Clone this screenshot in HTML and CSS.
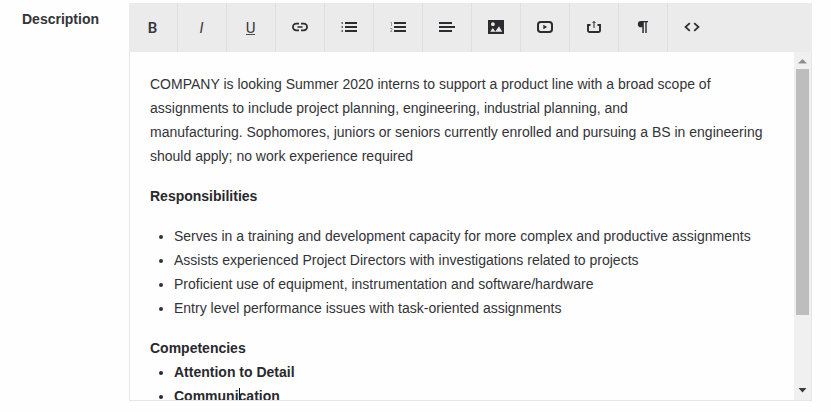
FILE: index.html
```
<!DOCTYPE html>
<html lang="en">
<head>
    <meta charset="UTF-8">
    <meta name="viewport" content="width=device-width, initial-scale=1.0">
    <title>Description</title>
    <link rel="stylesheet" href="styles.css">
</head>
<body>

<div class="form-row">
  <label class="form-label">Description</label>

  <div class="editor">
    <div class="toolbar">
      <button class="tool bold">B</button>
      <button class="tool italic">I</button>
      <button class="tool underline"><span>U</span></button>
      <button class="tool">
        <svg width="18" height="18" viewBox="0 0 18 18"><path d="M8 5.7H5.2a3.3 3.3 0 0 0 0 6.6H8M10 5.7h2.8a3.3 3.3 0 0 1 0 6.600H10M6.500 9h5" fill="none" stroke="#2b2b30" stroke-width="1.700"/></svg>
      </button>
      <button class="tool">
        <svg width="18" height="18" viewBox="0 0 18 18"><path d="M5 4h12v2H5zM5 8h12v2H5zM5 12h12v2H5z"/><path d="M1.500 4H3v2H1.500zM1.500 8H3v2H1.500zM1.500 12H3v2H1.500z" fill="#6b6461"/></svg>
      </button>
      <button class="tool">
        <svg width="18" height="18" viewBox="0 0 18 18"><path d="M5 4h12v2H5zM5 8h12v2H5zM5 12h12v2H5z"/><path d="M1.500 4.500h1V8M1.200 10.500h1.800v1.200L1.500 13.500h1.800" fill="none" stroke="#8a7f78" stroke-width=".8"/></svg>
      </button>
      <button class="tool">
        <svg width="18" height="18" viewBox="0 0 18 18"><path d="M1 4h13v2H1zM1 8h16v2H1zM1 12h13v2H1z"/></svg>
      </button>
      <button class="tool">
        <svg width="18" height="18" viewBox="0 0 18 18"><path fill-rule="evenodd" d="M1 2h16v14H1zM4 6.200a1.900 1.900 0 1 0 3.800 0a1.900 1.900 0 1 0-3.800 0M3.200 13.700h5.300L5.800 10zM8.200 13.700h7L12 8.200z"/></svg>
      </button>
      <button class="tool">
        <svg width="18" height="18" viewBox="0 0 18 18"><rect x="2" y="4" width="14" height="10" rx="2.800" fill="none" stroke="#2b2b30" stroke-width="2"/><path d="M7.300 6.800v4.400L11.200 9z"/></svg>
      </button>
      <button class="tool">
        <svg width="18" height="18" viewBox="0 0 18 18"><path d="M5.500 7H3v5.500A1.500 1.500 0 0 0 4.500 14h9a1.500 1.500 0 0 0 1.500-1.500V7h-2.500" fill="none" stroke="#2b2b30" stroke-width="1.900"/><path d="M8.400 4h1.200v6H8.400zM9 2.700l2 2.300H7z" fill="#4a4a4e"/></svg>
      </button>
      <button class="tool">
        <svg width="18" height="18" viewBox="0 0 18 18"><path d="M7 3h7v1.300h-1.300V15h-1.400V4.300H9.800V15H8.300V9.300H7a3.100 3.100 0 0 1 0-6.300z"/></svg>
      </button>
      <button class="tool">
        <svg width="18" height="18" viewBox="0 0 18 18"><path d="M6.800 5.200L2.500 9l4.300 3.800M11.200 5.200L15.500 9l-4.300 3.800" fill="none" stroke="#2b2b30" stroke-width="1.700"/></svg>
      </button>
    </div>

    <div class="editor-body">
      <div class="content">
        <p>COMPANY is looking Summer 2020 interns to support a product line with a broad scope of<br>assignments to include project planning, engineering, industrial planning, and<br>manufacturing. Sophomores, juniors or seniors currently enrolled and pursuing a BS in engineering<br>should apply; no work experience required</p>
        <p><strong>Responsibilities</strong></p>
        <ul>
          <li>Serves in a training and development capacity for more complex and productive assignments</li>
          <li>Assists experienced Project Directors with investigations related to projects</li>
          <li>Proficient use of equipment, instrumentation and software/hardware</li>
          <li>Entry level performance issues with task-oriented assignments</li>
        </ul>
        <strong>Competencies</strong>
        <ul class="strong-list">
          <li>Attention to Detail</li>
          <li>Communi<span class="caret"></span>cation</li>
        </ul>
      </div>

      <div class="scrollbar">
        <svg class="arrow" width="9" height="5" viewBox="0 0 9 5"><path d="M4.500 0L9 4.500H0z" fill="#8c8c8c"/></svg>
        <div class="thumb"></div>
        <svg class="arrow" width="9" height="5" viewBox="0 0 9 5"><path d="M.5 0h8l-4 4.500z" fill="#3c3c3c"/></svg>
      </div>
    </div>
  </div>
</div>

</body>
</html>
```
FILE: styles.css
```
* {
    box-sizing: border-box;
}

body {
    margin: 0;
    height: 412px;
    overflow: hidden;
    background: #fefefe;
    color: #333337;
    font-family: "Liberation Sans", Arial, sans-serif;
    font-size: 14px;
    line-height: 24px;
}

.form-row {
    display: flex;
    padding-top: 3px;
}

.form-label {
    width: 129px;
    padding: 4px 0 0 22px;
    font-weight: bold;
}

.editor {
    width: 683px;
}

.toolbar {
    display: flex;
    height: 49px;
    background: #ebebeb;
}

.tool {
    display: flex;
    align-items: center;
    justify-content: center;
    width: 49px;
    padding: 0 1px 0 0;
    border: 0;
    border-right: 1px solid #dfdfdf;
    background: none;
    color: #38383c;
    font-family: Roboto, sans-serif;
    font-size: 15px;
}

.tool:last-child {
    border-right-color: transparent;
}

.tool svg {
    display: block;
    margin-bottom: 2px;
    fill: #2b2b30;
}

.bold {
    font-weight: 600;
}

.italic {
    font-style: italic;
}

.underline span {
    display: block;
    height: 14px;
    margin-top: 1px;
    border-bottom: 1px solid #4a4a4e;
    line-height: 14px;
}

.editor-body {
    display: flex;
    height: 349px;
    border: 1px solid #e6e6e6;
    border-top: 0;
}

.content {
    flex: 1;
    padding: 20px;
    overflow: hidden;
    white-space: nowrap;
}

.content p {
    margin: 0 0 16px;
}

.content ul {
    margin: 0 0 16px;
    padding-left: 24px;
}

.content strong,
.strong-list {
    color: #29292d;
    font-weight: bold;
}

/* text cursor */
.caret {
    display: inline-block;
    width: 1px;
    height: 16px;
    margin-right: -1px;
    background: #111;
    vertical-align: -3px;
}

.scrollbar {
    display: flex;
    flex-direction: column;
    align-items: center;
    width: 17px;
    padding: 7px 1px 7px 0;
    background: #f0f0f0;
}

.thumb {
    width: 13px;
    height: 246px;
    margin: 5px 0 auto;
    background: #bdbdbd;
}
```
